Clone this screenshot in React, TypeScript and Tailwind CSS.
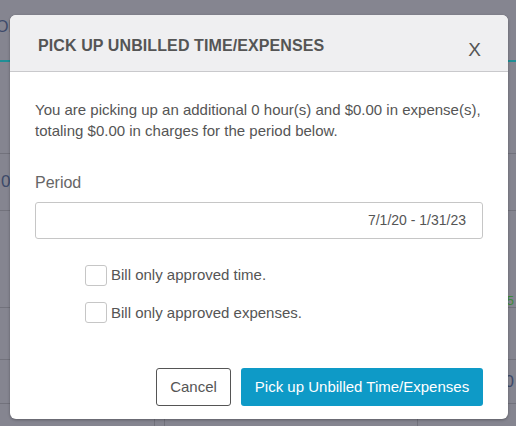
import React from "react";

function BackgroundPage() {
  return (
    <div className="flex h-[426px] w-[516px] flex-col bg-[#858590] text-[#3d4a6a]">
      <div className="h-[62px] border-b-2 border-[#1f8f96] pt-[15px] text-[16px]">
        <span className="-ml-[4px]">OF</span>
      </div>
      <div className="h-[92px] border-b border-[#72727c]" />
      <div className="flex h-[57px] items-center border-b border-[#72727c] text-[17px]">
        <span className="pl-[1px]">0</span>
      </div>
      <div className="flex h-[97px] justify-end border-b border-[#72727c] pt-[80px] pr-[2px] text-[13px] text-[#3f8a3a]">
        5
      </div>
      <div className="h-[52px] border-b border-[#72727c]" />
      <div className="flex h-[44px] items-center justify-end border-b border-[#72727c] pr-[2px] text-[17px]">
        0
      </div>
      <div className="flex flex-1">
        <div className="w-[155px] border-r border-[#72727c]" />
        <div className="w-[10px] border-r border-[#72727c]" />
        <div className="w-[253px] border-r border-[#72727c]" />
      </div>
    </div>
  );
}

function CheckRow({ label }: { label: string }) {
  return (
    <label className="flex items-center gap-[4px]">
      <span className="h-[21px] w-[22px] rounded-[3px] border border-[#c6c6c6] bg-white" />
      <span className="text-[15px] text-[#555]">{label}</span>
    </label>
  );
}

export default function App() {
  return (
    <div
      className="relative h-[426px] w-[516px] overflow-hidden"
      style={{ fontFamily: '"Liberation Sans", Arial, sans-serif' }}
    >
      <BackgroundPage />
      <div className="absolute left-[10px] top-[15px] flex h-[404px] w-[498px] flex-col overflow-hidden rounded-[6px] bg-white shadow-[0_1px_3px_rgba(0,0,0,0.3)]">
        <div className="flex h-[57px] items-center justify-between border-b border-[#c9c9cc] bg-[#efeff1] pl-[28px] pr-[27px]">
          <h2 className="pt-[6px] text-[16px] font-bold tracking-[0.1px] text-[#555]">
            PICK UP UNBILLED TIME/EXPENSES
          </h2>
          <button className="pt-[12px] text-[19px] leading-none text-[#555]">X</button>
        </div>
        <div className="flex flex-1 flex-col px-[25px] pt-[27px]">
          <p className="text-[15px] leading-[21px] text-[#555]">
            You are picking up an additional 0 hour(s) and $0.00 in expense(s), totaling $0.00 in
            charges for the period below.
          </p>
          <div className="mt-[30px] text-[16px] text-[#666]">Period</div>
          <div className="mt-[7px] flex h-[37px] items-center justify-end rounded-[3px] border border-[#c6c6c6] pr-[16px] text-[14px] text-[#555]">
            7/1/20 - 1/31/23
          </div>
          <div className="mt-[25px] flex flex-col gap-[15px] pl-[50px]">
            <CheckRow label="Bill only approved time." />
            <CheckRow label="Bill only approved expenses." />
          </div>
          <div className="mt-[44px] flex justify-end gap-[10px]">
            <button className="h-[38px] w-[75px] rounded-[3px] border border-[#555] text-[15px] text-[#555]">
              Cancel
            </button>
            <button className="h-[38px] w-[242px] rounded-[3px] bg-[#0e9ac7] text-[15px] text-white">
              Pick up Unbilled Time/Expenses
            </button>
          </div>
        </div>
      </div>
    </div>
  );
}
